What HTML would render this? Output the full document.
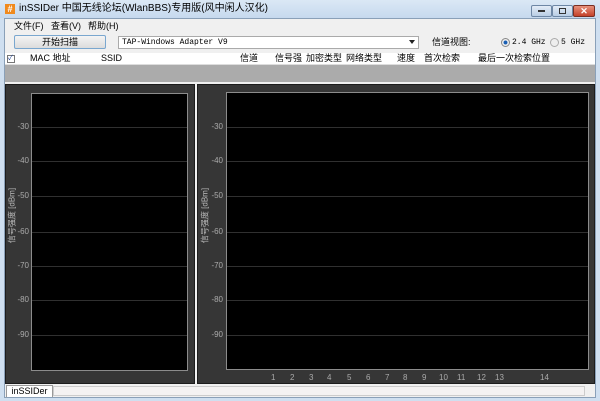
<!DOCTYPE html>
<html><head><meta charset="utf-8"><style>
*{margin:0;padding:0;box-sizing:border-box}
body{width:600px;height:401px;overflow:hidden;background:#cfdff0;font-family:"Liberation Sans","Noto Sans CJK SC",sans-serif;font-size:9px;line-height:11px;color:#000;position:relative}
.a{position:absolute}
.frame{left:4px;top:18px;width:592px;height:380px;background:#f0f0f0;border:1px solid #8aa0b8}
.mono{font-family:"Liberation Mono","Noto Sans CJK SC",monospace}
.panel{background:#363636;border:1px solid #1c1c1c}
.plot{background:#000;border:1px solid #8c8c8c}
.gl{position:absolute;left:0;right:0;height:1px;background:#303030}
.yl{position:absolute;color:#aaa;font-size:8px;text-align:right;width:24px}
.xl{position:absolute;color:#aaa;font-size:8px;top:372px}
.vt{position:absolute;color:#bbb;font-size:8px;transform:rotate(-90deg);white-space:nowrap;transform-origin:center}
</style></head><body>
<div class="a" style="left:0;top:0;width:600px;height:18px;background:linear-gradient(#dbe8f5,#c6d9ee)"></div>
<div class="a" style="left:5px;top:4px;width:10px;height:10px;background:#f08a1e;color:#fff;font-size:9px;line-height:10px;text-align:center;font-weight:bold">#</div>
<div class="a" style="left:19px;top:3px;font-size:10px;line-height:12px">inSSIDer 中国无线论坛(WlanBBS)专用版(风中闲人汉化)</div>
<div class="a" style="left:531px;top:5px;width:21px;height:12px;background:linear-gradient(#e3ecf7,#b9cde4);border:1px solid #6e87a5;border-radius:2px"></div>
<div class="a" style="left:552px;top:5px;width:21px;height:12px;background:linear-gradient(#e3ecf7,#b9cde4);border:1px solid #6e87a5;border-radius:2px"></div>
<div class="a" style="left:573px;top:5px;width:22px;height:12px;background:linear-gradient(#e7917c,#c4412a);border:1px solid #7a2e22;border-radius:2px;color:#fff;font-size:9px;text-align:center;line-height:10px;font-weight:bold">✕</div>
<div class="a" style="left:538px;top:10px;width:7px;height:2px;background:#333"></div>
<div class="a" style="left:559px;top:8px;width:7px;height:6px;border:1px solid #333"></div>
<div class="frame a"></div>
<div class="a" style="left:14px;top:21px">文件(F)</div>
<div class="a" style="left:51px;top:21px">查看(V)</div>
<div class="a" style="left:88px;top:21px">帮助(H)</div>
<div class="a" style="left:14px;top:35px;width:92px;height:14px;border:1px solid #7aa7cf;background:linear-gradient(#f4f4f4,#dcdcdc);text-align:center;line-height:12px;border-radius:2px">开始扫描</div>
<div class="a mono" style="left:118px;top:36px;width:301px;height:13px;border:1px solid #aaa;background:#fff;font-size:8px;line-height:11px;padding-left:3px">TAP-Windows Adapter V9</div>
<div class="a" style="left:409px;top:40px;border:3px solid transparent;border-top:4px solid #222"></div>
<div class="a" style="left:432px;top:37px">信道视图:</div>
<div class="a" style="left:501px;top:38px;width:9px;height:9px;border-radius:50%;border:1px solid #888;background:radial-gradient(#1a5fb4 35%,#eee 45%)"></div>
<div class="a mono" style="left:512px;top:37px;font-size:8px">2.4 GHz</div>
<div class="a" style="left:550px;top:38px;width:9px;height:9px;border-radius:50%;border:1px solid #aaa;background:#eee"></div>
<div class="a mono" style="left:561px;top:37px;font-size:8px">5 GHz</div>
<div class="a" style="left:5px;top:53px;width:590px;height:12px;background:#fff;border-bottom:1px solid #ddd"></div>
<div class="a" style="left:7px;top:55px;width:8px;height:8px;border:1px solid #777;font-size:7px;line-height:6px;color:#1a3d8f">✓</div>
<div class="a" style="left:30px;top:53px">MAC 地址</div>
<div class="a" style="left:101px;top:53px">SSID</div>
<div class="a" style="left:240px;top:53px">信道</div>
<div class="a" style="left:275px;top:53px">信号强</div>
<div class="a" style="left:306px;top:53px">加密类型</div>
<div class="a" style="left:346px;top:53px">网络类型</div>
<div class="a" style="left:397px;top:53px">速度</div>
<div class="a" style="left:424px;top:53px">首次检索</div>
<div class="a" style="left:478px;top:53px">最后一次检索</div>
<div class="a" style="left:532px;top:53px">位置</div>
<div class="a" style="left:5px;top:65px;width:590px;height:17px;background:#ababab"></div>

<div class="a panel" style="left:5px;top:84px;width:190px;height:300px"></div>
<div class="a panel" style="left:197px;top:84px;width:398px;height:300px"></div>

<div class="a plot" style="left:31px;top:93px;width:157px;height:278px">
<div class="gl" style="top:33px"></div><div class="gl" style="top:67px"></div><div class="gl" style="top:102px"></div><div class="gl" style="top:138px"></div><div class="gl" style="top:172px"></div><div class="gl" style="top:206px"></div><div class="gl" style="top:241px"></div>
</div>
<div class="yl" style="left:5px;top:121px">-30</div><div class="yl" style="left:5px;top:155px">-40</div><div class="yl" style="left:5px;top:190px">-50</div><div class="yl" style="left:5px;top:226px">-60</div><div class="yl" style="left:5px;top:260px">-70</div><div class="yl" style="left:5px;top:294px">-80</div><div class="yl" style="left:5px;top:329px">-90</div>
<div class="vt" style="left:-18px;top:210px;width:60px;text-align:center">信号强度 [dBm]</div>

<div class="a plot" style="left:226px;top:92px;width:363px;height:278px">
<div class="gl" style="top:34px"></div><div class="gl" style="top:68px"></div><div class="gl" style="top:103px"></div><div class="gl" style="top:139px"></div><div class="gl" style="top:173px"></div><div class="gl" style="top:207px"></div><div class="gl" style="top:242px"></div>
</div>
<div class="yl" style="left:199px;top:121px">-30</div><div class="yl" style="left:199px;top:155px">-40</div><div class="yl" style="left:199px;top:190px">-50</div><div class="yl" style="left:199px;top:226px">-60</div><div class="yl" style="left:199px;top:260px">-70</div><div class="yl" style="left:199px;top:294px">-80</div><div class="yl" style="left:199px;top:329px">-90</div>
<div class="vt" style="left:175px;top:210px;width:60px;text-align:center">信号强度 [dBm]</div>

<div class="xl" style="left:271px">1</div><div class="xl" style="left:290px">2</div><div class="xl" style="left:309px">3</div><div class="xl" style="left:327px">4</div><div class="xl" style="left:347px">5</div><div class="xl" style="left:366px">6</div><div class="xl" style="left:385px">7</div><div class="xl" style="left:403px">8</div><div class="xl" style="left:422px">9</div><div class="xl" style="left:439px">10</div><div class="xl" style="left:457px">11</div><div class="xl" style="left:477px">12</div><div class="xl" style="left:495px">13</div><div class="xl" style="left:540px">14</div>

<div class="a" style="left:5px;top:384px;width:590px;height:13px;background:#f0f0f0"></div>
<div class="a" style="left:53px;top:386px;width:532px;height:10px;border:1px solid #ccc;background:#f4f2f2"></div>
<div class="a" style="left:6px;top:385px;width:47px;height:12px;border:1px solid #999;border-bottom:none;background:#fff;text-align:center;line-height:11px">inSSIDer</div>
</body></html>
